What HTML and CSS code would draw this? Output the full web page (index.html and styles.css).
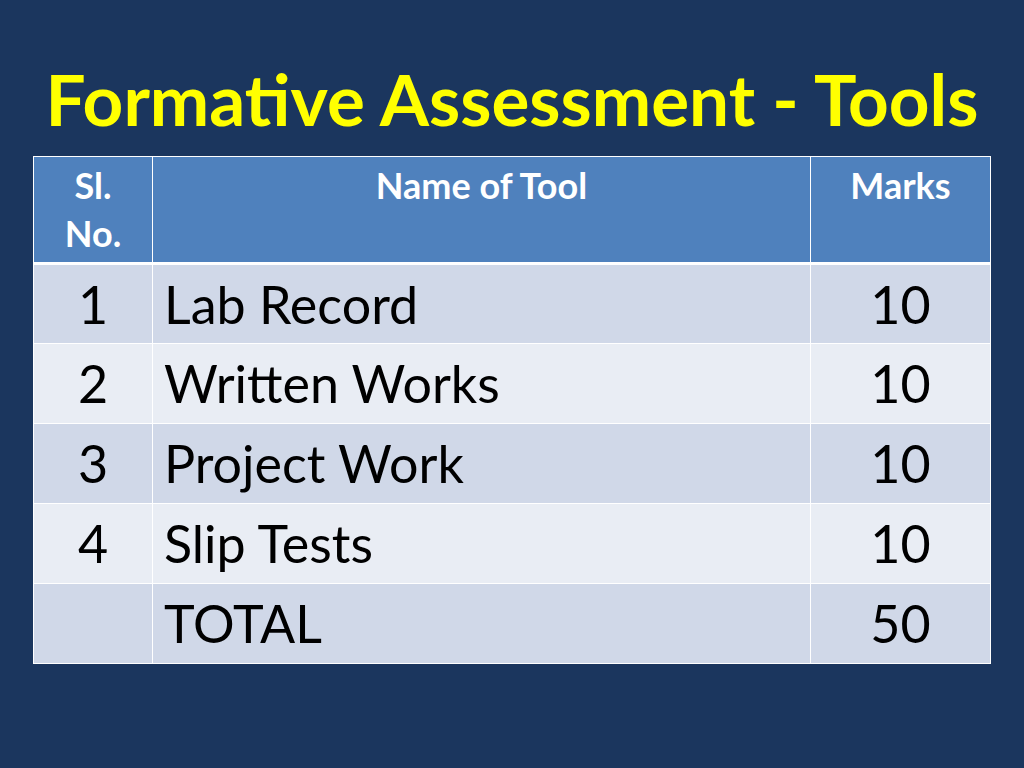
FILE: index.html
```html
<!DOCTYPE html>
<html>
<head>
<meta charset="utf-8">
<link rel="stylesheet" href="styles.css">
</head>
<body>
<div class="slide">
  <h1 class="title">Formative Assessment - Tools</h1>
  <table class="tools">
    <thead>
      <tr>
        <th class="c-no">Sl.<br>No.</th>
        <th class="c-name">Name of Tool</th>
        <th class="c-marks">Marks</th>
      </tr>
    </thead>
    <tbody>
      <tr class="odd"><td class="c-no">1</td><td class="c-name">Lab Record</td><td class="c-marks">10</td></tr>
      <tr class="even"><td class="c-no">2</td><td class="c-name">Written Works</td><td class="c-marks">10</td></tr>
      <tr class="odd"><td class="c-no">3</td><td class="c-name">Project Work</td><td class="c-marks">10</td></tr>
      <tr class="even"><td class="c-no">4</td><td class="c-name">Slip Tests</td><td class="c-marks">10</td></tr>
      <tr class="odd"><td class="c-no"></td><td class="c-name">TOTAL</td><td class="c-marks">50</td></tr>
    </tbody>
  </table>
</div>
</body>
</html>
```

FILE: styles.css
```css
html, body {
  margin: 0;
  padding: 0;
  background: #1b365e;
}
.slide {
  width: 1024px;
  height: 768px;
  padding-top: 64px;
  box-sizing: border-box;
  font-family: Lato, "Open Sans", sans-serif;
}
.title {
  margin: 0;
  height: 92px;
  text-align: center;
  color: #ffff00;
  font-weight: bold;
  font-size: 71px;
  line-height: 70px;
  white-space: nowrap;
}
.tools {
  margin-left: 33px;
  width: 958px;
  border-collapse: collapse;
  border: 1px solid #ffffff;
}
.tools th, .tools td {
  border: 1px solid #ffffff;
  vertical-align: top;
  padding: 0;
}
.tools th {
  background: #4f81bd;
  color: #ffffff;
  font-size: 36px;
  font-weight: bold;
  line-height: 48px;
  height: 107px;
  padding-top: 4px;
  box-sizing: border-box;
  border-bottom: 3px solid #ffffff;
}
.tools td {
  color: #000000;
  font-size: 52px;
  line-height: 60px;
  height: 80px;
  padding-top: 9px;
  box-sizing: border-box;
}
.c-no { width: 119px; text-align: center; }
.c-marks { width: 180px; text-align: center; }
td.c-name { padding-left: 11px; text-align: left; }
th.c-name { text-align: center; }
.odd td { background: #d0d8e8; }
.even td { background: #e9edf4; }
```
